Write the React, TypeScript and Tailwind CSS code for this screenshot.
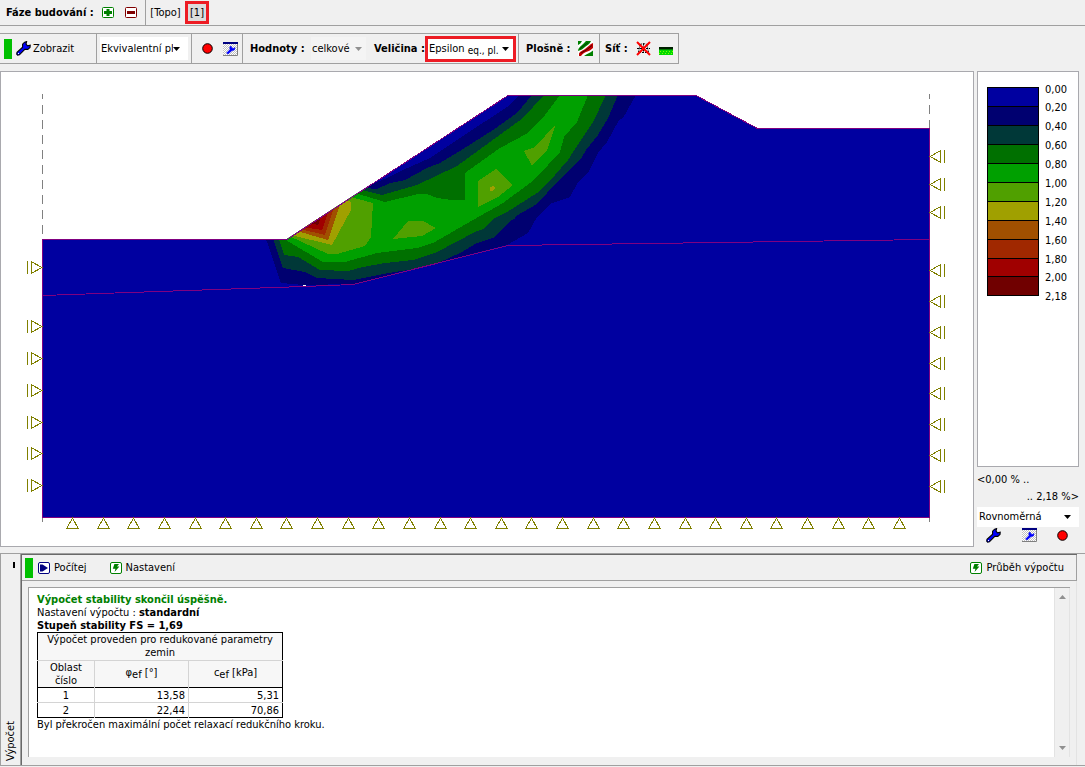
import React from "react";

type Pt = string;

const LEVELS: { color: string; label: string }[] = [
  { color: "#0000a0", label: "0,00" },
  { color: "#000070", label: "0,20" },
  { color: "#003838", label: "0,40" },
  { color: "#007000", label: "0,60" },
  { color: "#00a000", label: "0,80" },
  { color: "#50a000", label: "1,00" },
  { color: "#a0a000", label: "1,20" },
  { color: "#a05000", label: "1,40" },
  { color: "#a02800", label: "1,60" },
  { color: "#a00000", label: "1,80" },
  { color: "#700000", label: "2,00" },
];

const GROUND: Pt = "42,239 287,239 508,95 696,95 757,128 929,128 929,517 42,517";

const CONTOURS: { color: string; points: Pt }[] = [
  {
    color: "#000070",
    points:
      "266,239 281,283 303,285 353,284 507,245 528,233 537,217 550,204 570,197 578,182 589,171 598,153 607,142 619,120 623,118 636,95 519,95 507,107 460,138 430,158 403,170 387,178 370,185 350,190 287,235",
  },
  {
    color: "#003838",
    points:
      "273,239 283,268 305,272 317,278 353,280 383,274 420,268 440,262 460,253 477,243 495,237 511,220 515,219 516,216 537,204 557,182 582,157 586,150 598,135 608,118 618,95 532,95 517,113 493,130 460,151 440,163 427,168 405,180 390,183 377,189 364,188 287,235",
  },
  {
    color: "#007000",
    points:
      "279,239 284,255 298,257 320,270 348,271 363,267 385,263 413,260 437,252 475,232 483,229 495,218 507,212 537,193 555,175 568,160 573,152 593,122 606,95 544,95 523,118 490,142 457,166 417,185 382,195 362,190 287,235",
  },
  {
    color: "#00a000",
    points:
      "284,239 323,262 345,262 377,253 417,248 433,243 473,220 503,203 530,183 548,165 560,152 564,137 577,122 588,95 560,95 545,115 528,133 500,148 465,173 465,200 452,200 437,198 427,194 418,194 385,202 355,193 287,235",
  },
  { color: "#50a000", points: "289,236 328,254 337,254 365,246 371,237 373,203 351,197 340,200" },
  { color: "#50a000", points: "393,239 408,221 423,221 436,228 422,236" },
  { color: "#50a000", points: "478,181 496,169 513,185 498,197 478,207" },
  { color: "#50a000", points: "524,151 535,147 556,124 547,150 532,166" },
  { color: "#a0a000", points: "490,187 493,186 495,188 493,191 490,191" },
  { color: "#a0a000", points: "291,235 332,245 351,210 351,202 343,198" },
  { color: "#a05000", points: "297,231 328,240 340,205 336,202" },
  { color: "#a02800", points: "300,229 325,235 333,210 328,206" },
  { color: "#a00000", points: "302,227 322,230 328,213 324,209" },
  { color: "#700000", points: "309,223 318,225 321,217 318,213" },
];

const LEFT_SUPPORTS = [267, 326, 358, 390, 422, 453, 485];
const RIGHT_SUPPORTS = [156, 184, 212, 270, 301, 332, 363, 393, 424, 455, 486];
const BOTTOM_SUPPORTS = Array.from({ length: 28 }, (_, i) => Math.round(72 + i * 30.63));

function SlopeModel() {
  return (
    <svg
      viewBox="1 72 972 474"
      className="block w-full"
      shapeRendering="crispEdges"
      role="img"
      aria-label="Epsilon eq., pl."
    >
      <defs>
        <clipPath id="ground">
          <polygon points={GROUND} />
        </clipPath>
      </defs>
      <path d="M42.5 94V239M929.5 94V128" stroke="#808080" strokeDasharray="9 6" strokeDashoffset="4" fill="none" />
      <path d="M42.5 517V522M929.5 517V522" stroke="#808080" />
      <polygon points={GROUND} fill="#0000a0" />
      <g clipPath="url(#ground)">
        {CONTOURS.map((c, i) => (
          <polygon key={i} points={c.points} fill={c.color} />
        ))}
      </g>
      <g fill="none" stroke="#800080">
        <path d="M42.5 239.5H287L508 95.5H696L757.5 128.5H929.5V517.5H42.5Z" />
        <path d="M42 295.5L304 286.5L353 284.5L508 245.5L929 239.5" />
      </g>
      <path d="M303 285.5H306" stroke="#fff" />
      <g fill="none" stroke="#808000">
        {LEFT_SUPPORTS.map((y) => (
          <path key={y} d={`M27.5 ${y - 6}V${y + 7}M31.5 ${y - 6}V${y + 7}M32 ${y - 5}L42 ${y + 0.5}L32 ${y + 6}`} />
        ))}
        {RIGHT_SUPPORTS.map((y) => (
          <path key={y} d={`M944.5 ${y - 6}V${y + 7}M940.5 ${y - 6}V${y + 7}M940 ${y - 5}L930 ${y + 0.5}L940 ${y + 6}`} />
        ))}
        {BOTTOM_SUPPORTS.map((x) => (
          <path key={x} d={`M${x - 6} 528.5H${x + 7}M${x - 5} 528L${x + 0.5} 518L${x + 6} 528`} />
        ))}
      </g>
    </svg>
  );
}

function Wrench() {
  return (
    <svg viewBox="0 0 15 15" className="block h-[15px] w-[15px] shrink-0" aria-hidden="true">
      <path
        d="M8.6 1.2L10.6.6L10 3.2L11.6 4.8L14.2 4.2L14 6.4L11.8 8.4L8.8 8.3L3.4 13.8L1.6 14.2L.7 13.2L1 11.4L6.6 6.2L6.6 3.2Z"
        fill="#0000ff"
        stroke="#000"
        strokeWidth="1.1"
      />
      <path d="M2 13L3 12" stroke="#fff" strokeWidth="1" />
    </svg>
  );
}

function WindowWrench() {
  return (
    <svg viewBox="0 0 15 14" className="block h-[14px] w-[15px] shrink-0" aria-hidden="true">
      <defs>
        <pattern id="dots" width="2" height="2" patternUnits="userSpaceOnUse">
          <rect width="2" height="2" fill="#fff" />
          <rect width="1" height="1" fill="#c0c0c0" />
          <rect x="1" y="1" width="1" height="1" fill="#c0c0c0" />
        </pattern>
      </defs>
      <rect width="15" height="14" fill="url(#dots)" shapeRendering="crispEdges" />
      <path d="M14.5 2V13.5H0" stroke="#808080" fill="none" />
      <rect width="15" height="2" fill="#000080" />
      <path
        d="M8 4L8.8 6L10.4 6.4L12 5.6L11.4 8L9 8.6L5 12L3.6 11L7 7.6L6.8 5Z"
        fill="#0000ff"
        stroke="#0000ff"
        strokeWidth=".6"
      />
    </svg>
  );
}

function RedDot() {
  return (
    <svg viewBox="0 0 11 11" className="block h-[11px] w-[11px] shrink-0" aria-hidden="true">
      <circle cx="5.5" cy="5.5" r="4.8" fill="#f00" stroke="#000" strokeWidth="1" />
    </svg>
  );
}

function PlusMinus({ minus }: { minus?: boolean }) {
  const c = minus ? "#800000" : "#008000";
  return (
    <svg viewBox="0 0 12 11" className="block h-[11px] w-[12px]" aria-hidden="true">
      <rect x=".5" y=".5" width="11" height="10" rx="1" fill="#fff" stroke={c} />
      <path d={minus ? "M2 5.5H10" : "M2 5.5H10M6 2V9"} stroke={c} strokeWidth="3" />
    </svg>
  );
}

function Bolt() {
  return (
    <svg viewBox="0 0 12 12" className="block h-[12px] w-[12px] shrink-0" aria-hidden="true">
      <rect x=".5" y=".5" width="11" height="11" rx="1.5" fill="#fff" stroke="#008000" />
      <path d="M4.4 2H9L7 4.6H9.4L4.6 10L5.4 6.8H2.8Z" fill="#008000" />
    </svg>
  );
}

function Play() {
  return (
    <svg viewBox="0 0 12 12" className="block h-[12px] w-[12px] shrink-0" aria-hidden="true">
      <rect x=".5" y=".5" width="11" height="11" rx="1.5" fill="#fff" stroke="#000080" />
      <path d="M2 2.5H4.5L10 6L4.5 9.5H2Z" fill="#000080" />
    </svg>
  );
}

function IsoAreas() {
  return (
    <svg viewBox="0 0 15 15" className="block h-[15px] w-[15px]" aria-hidden="true">
      <rect width="15" height="15" fill="#fff" />
      <path d="M0 0H4C3 2 2 3 0 4Z" fill="#008000" />
      <path d="M0 10C0 7 2 6 4 4C6 2 7 1 8 0H13C12 3 9 4 7 6C5 8 3 9 0 10Z" fill="#008000" />
      <path d="M2 7.5L10 1.5" stroke="#004000" strokeWidth="1" />
      <path d="M1 13C1 11 4 10 7 8C10 6 12 3 15 2V7C13 9 11 10 8 11C5 12 4 14 3 15H1Z" fill="#c00000" />
      <path d="M3 12L9 8.5L14 4.5" stroke="#500000" strokeWidth="1" fill="none" />
      <path d="M6 15C8 13 12 12 15 9.5V15Z" fill="#008000" />
    </svg>
  );
}

function MeshOff() {
  return (
    <svg viewBox="0 0 15 15" className="block h-[15px] w-[15px]" aria-hidden="true">
      <path d="M4 3.5L7.5 2.5L11 3.5M1 7.5H14M3 11.5H12M4 3.5L2.5 11.5M11 3.5L12.5 11.5M7.5 2.5V12" stroke="#000" fill="none" strokeWidth="1" strokeDasharray="2 1" />
      <path d="M1 1L14 14M14 1L1 14" stroke="#f00" strokeWidth="2" />
    </svg>
  );
}

function Grass() {
  return (
    <svg viewBox="0 0 14 8" className="block h-[8px] w-[14px]" shapeRendering="crispEdges" aria-hidden="true">
      <rect width="14" height="8" fill="#00d800" />
      <rect width="14" height="2" fill="#002000" />
      <rect y="2" width="14" height="1" fill="#008000" />
      <path d="M1 4.5H14M0 6.5H14" stroke="#80ff00" strokeDasharray="1 2" />
    </svg>
  );
}

function Arrow({ muted }: { muted?: boolean }) {
  return (
    <svg viewBox="0 0 7 4" className="pointer-events-none block h-[4px] w-[7px] shrink-0" aria-hidden="true">
      <path d="M0 0H7L3.5 4Z" fill={muted ? "#909090" : "#000"} />
    </svg>
  );
}

const Sep = () => <span className="w-px shrink-0 self-stretch bg-[#a0a0a0]" />;

function ResultsTable() {
  return (
    <table className="w-[246px] table-fixed border-collapse border border-black text-center leading-[13px]">
      <colgroup>
        <col className="w-[57px]" />
        <col className="w-[94px]" />
        <col />
      </colgroup>
      <thead className="bg-[#f7f7f7]">
        <tr>
          <th colSpan={3} className="border-b border-[#d4d4d4] px-2 pb-px font-normal">
            Výpočet proveden pro redukované parametry zemin
          </th>
        </tr>
        <tr className="border-b border-b-black">
          <th className="border-r border-[#d4d4d4] px-2 font-normal">Oblast číslo</th>
          <th className="border-r border-[#d4d4d4] pb-1 font-normal">
            φ<sub className="text-[11px]">ef</sub> [°]
          </th>
          <th className="pb-1 font-normal">
            c<sub className="text-[11px]">ef</sub> [kPa]
          </th>
        </tr>
      </thead>
      <tbody>
        {[
          ["1", "13,58", "5,31"],
          ["2", "22,44", "70,86"],
        ].map((r, i) => (
          <tr key={r[0]} className={i === 0 ? "border-b border-[#d4d4d4]" : ""}>
            <td className="border-r border-[#d4d4d4] pt-px">{r[0]}</td>
            <td className="border-r border-[#d4d4d4] pr-[3px] pt-px text-right">{r[1]}</td>
            <td className="pr-[3px] pt-px text-right">{r[2]}</td>
          </tr>
        ))}
      </tbody>
    </table>
  );
}

export default function App() {
  return (
    <div className="flex min-h-screen flex-col bg-[#f0f0f0] font-['DejaVu_Sans_Condensed','Noto_Sans',sans-serif] text-[11px] leading-[14px] whitespace-nowrap text-black">
      <header className="flex h-[26px] items-center border-b border-[#a0a0a0] pl-1.5">
        <span className="w-[96px] font-bold">Fáze budování :</span>
        <button type="button" aria-label="Přidat fázi" className="mr-[11px]">
          <PlusMinus />
        </button>
        <button type="button" aria-label="Odebrat fázi" className="mr-2">
          <PlusMinus minus />
        </button>
        <Sep />
        <button type="button" className="w-[39px] shrink-0 text-center">
          [Topo]
        </button>
        <button type="button" className="h-[23px] w-[24px] border-3 border-[#ed1c24] bg-[#dcdcdc]">
          [1]
        </button>
      </header>

      <nav className="mt-[7px] flex h-[31px] items-center self-start border-y border-r border-[#a0a0a0] pl-1">
        <span className="h-5 w-2 shrink-0 bg-[#00c000]" />
        <button type="button" className="flex w-[84px] items-center gap-0.5 pl-1">
          <Wrench />
          Zobrazit
        </button>
        <Sep />
        <label className="mx-[3px] flex h-[23px] w-[88px] items-center bg-white pr-2">
          <select aria-label="Typ" className="h-full min-w-0 flex-1 appearance-none overflow-hidden pl-px text-clip outline-none">
            <option>Ekvivalentní pl</option>
          </select>
          <Arrow />
        </label>
        <Sep />
        <button type="button" aria-label="Záznam" className="ml-[10px]">
          <RedDot />
        </button>
        <button type="button" aria-label="Nastavení zobrazení" className="mr-1 ml-[10px]">
          <WindowWrench />
        </button>
        <Sep />
        <span className="w-[68px] pl-[7px] font-bold">Hodnoty :</span>
        <label className="flex h-[23px] w-[55px] items-center bg-[#f4f4f4] pr-1">
          <select aria-label="Hodnoty" className="h-full min-w-0 flex-1 appearance-none pl-px outline-none">
            <option>celkové</option>
          </select>
          <Arrow muted />
        </label>
        <span className="w-[59px] pl-2 font-bold">Veličina :</span>
        <button
          type="button"
          aria-haspopup="listbox"
          className="mr-0.5 flex h-[26px] w-[91px] items-center justify-between border-3 border-[#ed1c24] bg-white pr-1 pl-px"
        >
          <span>
            Epsilon <sub className="text-[10px]">eq., pl.</sub>
          </span>
          <Arrow />
        </button>
        <Sep />
        <span className="w-[59px] pl-[7px] font-bold">Plošně :</span>
        <button type="button" aria-label="Izoplochy" className="mr-1.5">
          <IsoAreas />
        </button>
        <Sep />
        <span className="w-[36px] pl-[5px] font-bold">Síť :</span>
        <button type="button" aria-label="Skrýt síť" className="mr-2">
          <MeshOff />
        </button>
        <button type="button" aria-label="Terén" className="mt-1 mr-[5px]">
          <Grass />
        </button>
      </nav>

      <main className="mt-[7px] flex items-stretch gap-[3px] pr-1.5">
        <section className="min-w-0 flex-1 border border-[#a9a9ae] bg-white">
          <SlopeModel />
        </section>
        <aside className="flex w-[102px] shrink-0 flex-col">
          <div className="flex flex-1 items-start gap-1.5 border border-[#a9a9ae] bg-white pt-[15px] pl-[9px]">
            <div className="w-[52px] border border-black">
              {LEVELS.map((l, i) => (
                <div
                  key={l.label}
                  className={i < 9 ? "h-[19px] border-b border-black" : i === 9 ? "h-[18px] border-b border-black" : "h-[18px]"}
                  style={{ backgroundColor: l.color }}
                />
              ))}
            </div>
            <ul className="-mt-[7px] leading-[19px]">
              {LEVELS.map((l, i) => (
                <li key={l.label} className={i === 0 || i === 9 ? "h-[18px]" : "h-[19px]"}>
                  {l.label}
                </li>
              ))}
              <li>2,18</li>
            </ul>
          </div>
          <p className="pt-1 leading-[17px]">&lt;0,00 % ..</p>
          <p className="text-right leading-[17px]">.. 2,18 %&gt;</p>
          <label className="mt-0.5 flex h-5 items-center bg-white pr-2">
            <select aria-label="Rozdělení stupnice" className="h-full min-w-0 flex-1 appearance-none pl-0.5 outline-none">
              <option>Rovnoměrná</option>
            </select>
            <Arrow />
          </label>
          <div className="flex h-5 items-start justify-between pt-px pr-[11px] pl-[9px]">
            <button type="button" aria-label="Upravit stupnici">
              <Wrench />
            </button>
            <button type="button" aria-label="Nastavení stupnice">
              <WindowWrench />
            </button>
            <button type="button" aria-label="Záznam stupnice" className="pt-0.5">
              <RedDot />
            </button>
          </div>
        </aside>
      </main>

      <section className="mt-[6px] mb-px flex flex-1 border-y border-[#a0a0a0]">
        <div className="flex w-[21px] shrink-0 flex-col items-center justify-between border-x border-[#a0a0a0] py-1">
          <span className="mt-1 ml-1.5 h-1.5 w-0.5 bg-black" />
          <button type="button" className="rotate-180 [writing-mode:vertical-rl]">
            Výpočet
          </button>
        </div>
        <div className="mr-2 flex min-w-0 flex-1 flex-col border-t border-l border-[#696969]">
          <div className="flex h-[26px] items-center border-r border-b border-[#a0a0a0] pr-3 pl-[3px]">
            <span className="h-5 w-2 shrink-0 bg-[#00c000]" />
            <button type="button" className="ml-[5px] flex items-center gap-1">
              <Play />
              Počítej
            </button>
            <button type="button" className="ml-[23px] flex items-center gap-1">
              <Bolt />
              Nastavení
            </button>
            <button type="button" className="ml-auto flex items-center gap-1">
              <Bolt />
              Průběh výpočtu
            </button>
          </div>
          <div className="flex flex-1 border-r border-[#e3e3e3] pt-[6px] pr-1.5 pb-2 pl-1.5">
            <div className="flex flex-1 border-t border-l border-[#a0a0a0] bg-white">
              <div className="flex-1 pt-[5px] pl-2 leading-[13px]">
                <p className="font-bold text-[#008000]">Výpočet stability skončil úspěšně.</p>
                <p>
                  Nastavení výpočtu : <b>standardní</b>
                </p>
                <p className="font-bold">Stupeň stability FS = 1,69</p>
                <div className="whitespace-normal">
                  <ResultsTable />
                </div>
                <p>Byl překročen maximální počet relaxací redukčního kroku.</p>
              </div>
              <div className="flex w-4 flex-col items-center justify-between border-x border-[#e3e3e3] bg-[#f0f0f0] py-[7px]">
                <span className="rotate-180">
                  <Arrow muted />
                </span>
                <Arrow muted />
              </div>
            </div>
          </div>
        </div>
      </section>
    </div>
  );
}
